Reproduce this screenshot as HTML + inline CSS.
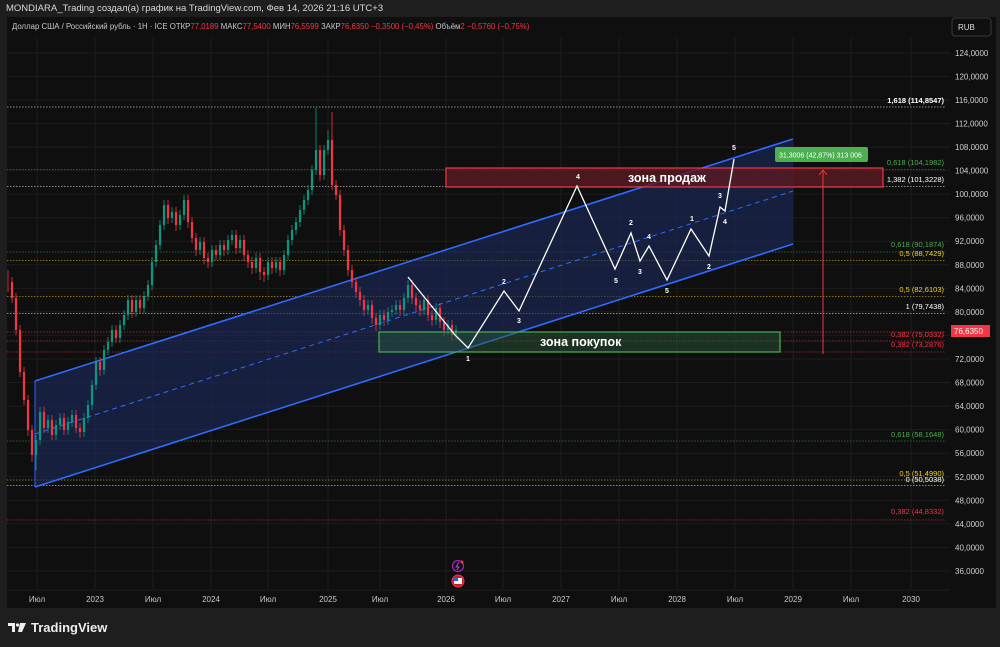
<!DOCTYPE html>
<html><head><meta charset="utf-8"><style>
html,body{margin:0;padding:0;background:#1e1e1e;width:1000px;height:647px;overflow:hidden;font-family:"Liberation Sans",sans-serif}
svg{position:absolute;left:0;top:0}
</style></head><body>
<svg width="1000" height="647" viewBox="0 0 1000 647" xmlns="http://www.w3.org/2000/svg" font-family="Liberation Sans, sans-serif">
<rect x="0" y="0" width="1000" height="647" fill="#1e1e1e"/>
<text x="6" y="11" font-size="9.5" fill="#d8d8d8">MONDIARA_Trading создал(а) график на TradingView.com, Фев 14, 2026 21:16 UTC+3</text>
<rect x="7" y="17" width="989" height="591" fill="#0f0f0f"/>
<g stroke="#1d1d1d" stroke-width="1">
<path d="M37,38V590M95,38V590M153,38V590M211,38V590M268,38V590M328,38V590M380,38V590M446,38V590M503,38V590M561,38V590M619,38V590M677,38V590M735,38V590M793,38V590M851,38V590M911,38V590"/>
<path d="M7,52.9H950M7,76.4H950M7,100H950M7,123.5H950M7,147.1H950M7,170.6H950M7,194.2H950M7,217.7H950M7,241.3H950M7,264.8H950M7,288.4H950M7,311.9H950M7,335.4H950M7,359H950M7,382.5H950M7,406.1H950M7,429.6H950M7,453.2H950M7,476.7H950M7,500.3H950M7,523.8H950M7,547.4H950M7,570.9H950"/>
</g>
<g stroke-width="1" stroke-dasharray="1.5,1.5" fill="none">
<path d="M7,107H946M7,186.5H946M7,313.5H946M7,485.5H946" stroke="#8a8a8a"/>
<path d="M7,169.5H946M7,252H946M7,441H946" stroke="#2e5e30"/>
<path d="M7,260.5H946M7,296.5H946M7,480H946" stroke="#807020"/>
<path d="M7,332H946M7,341H946M7,352H946M7,520H946" stroke="#8a2a30"/>
</g>
<polygon points="35,381 793,139 793,244 35,487" fill="#1a2a5c" fill-opacity="0.6"/>
<line x1="35" y1="381" x2="35" y2="487" stroke="#2962ff" stroke-width="1"/>
<line x1="35" y1="381" x2="793" y2="139" stroke="#2f6bff" stroke-width="1.6"/>
<line x1="35" y1="487" x2="793" y2="244" stroke="#2f6bff" stroke-width="1.6"/>
<line x1="35" y1="434" x2="793" y2="191" stroke="#2f6bff" stroke-width="1" stroke-dasharray="5,4"/>
<g fill="none">
<path stroke="#f23645" stroke-width="0.8" d="M8,270V292M12,277V303M16,293V335M20,325V377M24,367V405M28,395V436M32,425V462M44,407V433M52,415V440M64,413V435M76,410V433M80,423V438M100,357V376M116,325V343M132,295V318M140,295V313M168,200V224M176,207V231M188,195V228M192,217V243M196,233V256M204,237V264M208,253V268M216,245V260M224,240V256M236,230V254M244,235V261M248,250V268M252,257V274M260,253V280M264,267V282M272,257V274M280,257V276M320,145V181M332,112V190M336,180V200M340,190V236M344,225V256M348,245V276M352,265V288M356,277V298M360,287V306M364,295V316M372,300V324M376,313V331M384,310V326M400,300V316M412,280V304M416,293V311M420,300V316M428,295V321M432,310V326M440,303V328M444,317V336M452,320V341"/>
<path stroke="#089981" stroke-width="0.8" d="M36,435V470M40,407V445M48,415V433M56,420V440M60,413V430M68,417V435M72,410V427M84,413V437M88,400V423M92,380V410M96,357V390M104,345V375M108,337V355M112,325V347M120,320V343M124,310V330M128,295V320M136,295V317M144,291V313M148,280V301M152,257V290M156,240V267M160,220V250M164,200V230M172,207V223M180,210V230M184,195V220M200,237V255M212,245V267M220,240V260M228,235V255M232,230V245M240,235V253M256,253V273M268,257V280M276,257V273M284,250V275M288,235V260M292,225V245M296,217V235M300,205V227M304,195V215M308,185V205M312,165V195M316,108V175M324,145V180M328,130V155M368,300V315M380,310V330M388,307V325M392,305V317M396,300V315M404,293V315M408,280V303M424,295V315M436,303V325M448,320V335M456,325V340"/>
<path stroke="#f23645" stroke-width="2.2" d="M12,282V298M16,298V330M20,330V372M24,372V400M28,400V430M32,430V455M44,412V428M52,420V435M64,418V430M76,415V428M80,428V432M100,362V370M116,330V338M132,300V312M140,300V308M168,205V218M176,212V225M188,200V222M192,222V238M196,238V250M204,242V258M208,258V262M216,250V255M224,245V250M236,235V248M244,240V255M248,255V262M252,262V268M260,258V272M264,272V275M272,262V268M280,262V270M320,150V175M332,140V185M336,185V195M340,195V230M344,230V250M348,250V270M352,270V282M356,282V292M360,292V300M364,300V310M372,305V318M376,318V325M384,315V320M400,305V310M412,285V298M416,298V305M420,305V310M428,300V315M432,315V320M440,308V322M444,322V330M452,325V335"/>
<path stroke="#089981" stroke-width="2.2" d="M36,440V455M40,412V440M48,420V428M56,425V435M60,418V425M68,422V430M72,415V422M84,418V432M88,405V418M92,385V405M96,362V385M104,350V370M108,342V350M112,330V342M120,325V338M124,315V325M128,300V315M136,300V312M144,296V308M148,285V296M152,262V285M156,245V262M160,225V245M164,205V225M172,212V218M180,215V225M184,200V215M200,242V250M212,250V262M220,245V255M228,240V250M232,235V240M240,240V248M256,258V268M268,262V275M276,262V268M284,255V270M288,240V255M292,230V240M296,222V230M300,210V222M304,200V210M308,190V200M312,170V190M316,150V170M324,150V175M328,140V150M368,305V310M380,315V325M388,312V320M392,310V312M396,305V310M404,298V310M408,285V298M424,300V310M436,308V320M448,325V330M456,330V335"/>
</g>
<rect x="446" y="168" width="437" height="19" fill="#5a1a22" fill-opacity="0.8" stroke="#f23645" stroke-width="1.2"/>
<text x="628" y="182" font-size="12.5" fill="#fff" font-weight="bold">зона продаж</text>
<rect x="379" y="332" width="401" height="20" fill="#2a5a3a" fill-opacity="0.45" stroke="#4caf50" stroke-width="1.2"/>
<text x="540" y="346" font-size="12.5" fill="#fff" font-weight="bold">зона покупок</text>
<polyline points="408,277 455,335 468,348 504,291 519,311 577,186 615,269 631,233 640,261 649,246 667,280 691,229 709,256 720,207 725,211 734,159" fill="none" stroke="#fff" stroke-width="1.3"/>
<g font-size="7" fill="#fff" font-weight="bold" text-anchor="middle">
<text x="468" y="361">1</text><text x="504" y="284">2</text><text x="519" y="323">3</text><text x="578" y="179">4</text><text x="616" y="283">5</text><text x="631" y="225">2</text><text x="640" y="274">3</text><text x="649" y="239">4</text><text x="667" y="293">5</text><text x="692" y="221">1</text><text x="709" y="269">2</text><text x="720" y="198">3</text><text x="725" y="224">4</text><text x="734" y="150">5</text>
</g>
<line x1="823" y1="171" x2="823" y2="354" stroke="#f23645" stroke-width="1"/>
<polyline points="819,175 823,170 827,175" fill="none" stroke="#f23645" stroke-width="1"/>
<rect x="775" y="147" width="93" height="15" rx="2" fill="#4caf50"/>
<text x="779" y="157.5" font-size="7" fill="#fff">31,3006 (42,87%) 313 006</text>
<g font-size="7.5" text-anchor="end">
<text x="944" y="103" fill="#fff" font-weight="bold">1,618 (114,8547)</text>
<text x="944" y="165" fill="#4caf50">0,618 (104,1982)</text>
<text x="944" y="182" fill="#fff">1,382 (101,3228)</text>
<text x="944" y="247" fill="#4caf50">0,618 (90,1874)</text>
<text x="944" y="256" fill="#f5d31c">0,5 (88,7429)</text>
<text x="944" y="292" fill="#f5d31c">0,5 (82,6103)</text>
<text x="944" y="309" fill="#fff">1 (79,7438)</text>
<text x="944" y="337" fill="#f23645">0,382 (75,0332)</text>
<text x="944" y="347" fill="#f23645">0,382 (73,2876)</text>
<text x="944" y="437" fill="#4caf50">0,618 (58,1648)</text>
<text x="944" y="476" fill="#f5d31c">0,5 (51,4990)</text>
<text x="944" y="482" fill="#fff">0 (50,5038)</text>
<text x="944" y="514" fill="#f23645">0,382 (44,8332)</text>
</g>
<g font-size="8" fill="#d0d0d0">
<text x="955" y="56">124,0000</text><text x="955" y="79.5">120,0000</text><text x="955" y="103">116,0000</text><text x="955" y="126.5">112,0000</text><text x="955" y="150">108,0000</text><text x="955" y="173.5">104,0000</text><text x="955" y="197">100,0000</text><text x="955" y="220.5">96,0000</text><text x="955" y="244">92,0000</text><text x="955" y="268">88,0000</text><text x="955" y="291.5">84,0000</text><text x="955" y="315">80,0000</text><text x="955" y="362">72,0000</text><text x="955" y="385.5">68,0000</text><text x="955" y="409">64,0000</text><text x="955" y="432.5">60,0000</text><text x="955" y="456">56,0000</text><text x="955" y="480">52,0000</text><text x="955" y="503.5">48,0000</text><text x="955" y="527">44,0000</text><text x="955" y="550.5">40,0000</text><text x="955" y="574">36,0000</text>
</g>
<rect x="952" y="18" width="39" height="18" rx="3" fill="#0f0f0f" stroke="#3a3a3a"/>
<text x="958" y="30" font-size="8" fill="#ddd">RUB</text>
<rect x="951" y="325" width="39" height="12" fill="#f23645"/>
<text x="954" y="334" font-size="8" fill="#fff">76,6350</text>
<text x="12" y="29" font-size="7.8" fill="#c8c8c8">Доллар США / Российский рубль · 1Н · ICE  ОТКР<tspan fill="#f23645">77,0189</tspan>  МАКС<tspan fill="#f23645">77,5400</tspan>  МИН<tspan fill="#f23645">76,5599</tspan>  ЗАКР<tspan fill="#f23645">76,6350  −0,3500 (−0,45%)</tspan>  Объём<tspan fill="#f23645">2  −0,5760 (−0,75%)</tspan></text>
<line x1="7" y1="590" x2="950" y2="590" stroke="#1c1c1c"/>
<g font-size="8" fill="#c8c8c8" text-anchor="middle">
<text x="37" y="602">Июл</text><text x="95" y="602">2023</text><text x="153" y="602">Июл</text><text x="211" y="602">2024</text><text x="268" y="602">Июл</text><text x="328" y="602">2025</text><text x="380" y="602">Июл</text><text x="446" y="602">2026</text><text x="503" y="602">Июл</text><text x="561" y="602">2027</text><text x="619" y="602">Июл</text><text x="677" y="602">2028</text><text x="735" y="602">Июл</text><text x="793" y="602">2029</text><text x="851" y="602">Июл</text><text x="911" y="602">2030</text>
</g>
<circle cx="458" cy="566" r="5.5" fill="none" stroke="#9c27b0" stroke-width="1.3"/>
<path d="M459,562 L456,567 L459,567 L457,570" fill="none" stroke="#b04fd0" stroke-width="1"/>
<circle cx="462" cy="562" r="1.5" fill="#f23645"/>
<circle cx="458" cy="581" r="6" fill="#c0202f" stroke="#f23645"/>
<rect x="454" y="578" width="8" height="6" fill="#eee"/>
<rect x="454" y="578" width="4" height="3" fill="#3060c0"/>
<g fill="#eee">
<path d="M8,623 h7 v9 h-3 v-6 h-4z"/><circle cx="17.5" cy="625" r="1.6"/><path d="M20,623 h6 l-4,9 h-4z"/>
</g>
<text x="31" y="632" font-size="13" fill="#eee" font-weight="bold">TradingView</text>
</svg>
</body></html>
